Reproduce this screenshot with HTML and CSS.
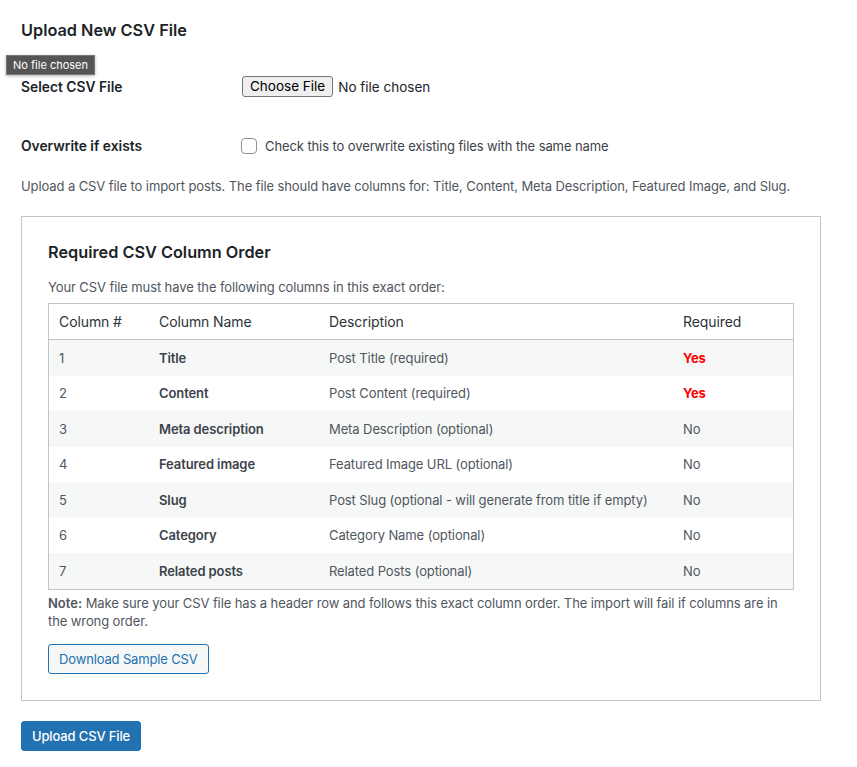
FILE: index.html
```html
<!DOCTYPE html>
<html>
<head>
<meta charset="utf-8">
<link rel="stylesheet" href="styles.css">
</head>
<body>
<div class="wrap">
  <h2 class="title">Upload New CSV File</h2>
  <div class="form-table">
    <div class="form-row">
      <div class="label">Select CSV File</div>
      <div class="field">
        <span class="file-input"><button class="file-btn" type="button">Choose File</button><span class="file-name">No file chosen</span></span>
      </div>
    </div>
    <div class="form-row">
      <div class="label">Overwrite if exists</div>
      <div class="field">
        <label class="check"><span class="checkbox"></span>Check this to overwrite existing files with the same name</label>
      </div>
    </div>
  </div>
  <p class="desc">Upload a CSV file to import posts. The file should have columns for: Title, Content, Meta Description, Featured Image, and Slug.</p>

  <div class="box">
    <h3 class="box-title">Required CSV Column Order</h3>
    <p class="box-desc">Your CSV file must have the following columns in this exact order:</p>
    <table class="cols">
      <thead>
        <tr><th class="c1">Column #</th><th class="c2">Column Name</th><th class="c3">Description</th><th class="c4">Required</th></tr>
      </thead>
      <tbody>
        <tr><td>1</td><td class="name">Title</td><td>Post Title (required)</td><td class="yes">Yes</td></tr>
        <tr><td>2</td><td class="name">Content</td><td>Post Content (required)</td><td class="yes">Yes</td></tr>
        <tr><td>3</td><td class="name">Meta description</td><td>Meta Description (optional)</td><td>No</td></tr>
        <tr><td>4</td><td class="name">Featured image</td><td>Featured Image URL (optional)</td><td>No</td></tr>
        <tr><td>5</td><td class="name">Slug</td><td>Post Slug (optional - will generate from title if empty)</td><td>No</td></tr>
        <tr><td>6</td><td class="name">Category</td><td>Category Name (optional)</td><td>No</td></tr>
        <tr><td>7</td><td class="name">Related posts</td><td>Related Posts (optional)</td><td>No</td></tr>
      </tbody>
    </table>
    <p class="note"><strong>Note:</strong> Make sure your CSV file has a header row and follows this exact column order. The import will fail if columns are in the wrong order.</p>
    <button class="btn-secondary" type="button">Download Sample CSV</button>
  </div>

  <button class="btn-primary" type="button">Upload CSV File</button>
</div>
<div class="tooltip">No file chosen</div>
</body>
</html>
```
FILE: styles.css
```css
html, body {
  margin: 0;
  padding: 0;
  background: #ffffff;
}
body {
  font-family: Inter, "Liberation Sans", sans-serif;
  font-size: 13px;
  letter-spacing: -0.1px;
  color: #3c434a;
  position: relative;
}
.wrap {
  padding: 0 0 0 21px;
  width: 800px;
}
.title {
  margin: 19px 0 0;
  font-size: 16.3px;
  line-height: 22px;
  font-weight: 600;
  letter-spacing: 0;
  color: #1d2327;
}
.form-table {
  margin-top: 16px;
}
.form-row {
  display: flex;
  align-items: center;
  height: 59px;
}
.label {
  width: 220px;
  font-size: 13.8px;
  font-weight: 600;
  letter-spacing: 0;
  color: #1d2327;
}
.field {
  display: flex;
  align-items: center;
}
.file-input {
  display: flex;
  align-items: center;
  font-size: 13.5px;
  letter-spacing: 0;
  color: #1d2327;
}
.file-btn {
  font-family: inherit;
  font-size: 13.5px;
  color: #000;
  background: #efefef;
  border: 1px solid #767676;
  border-radius: 3px;
  height: 21px;
  padding: 0 7px;
  line-height: 19px;
  margin: 0 5px 0 1px;
}
.file-name {
  line-height: 20px;
}
.check {
  display: flex;
  align-items: center;
  color: #3c434a;
}
.checkbox {
  width: 14px;
  height: 14px;
  border: 1px solid #8c8f94;
  border-radius: 4px;
  background: #fff;
  margin: 0 8px 0 0;
}
.desc {
  margin: 2px 0 0;
  line-height: 18px;
  color: #50575e;
}
.box {
  margin-top: 21px;
  border: 1px solid #c3c4c7;
  padding: 25px 26px 26px;
}
.box-title {
  margin: 0;
  font-size: 16.3px;
  line-height: 20px;
  font-weight: 600;
  letter-spacing: 0;
  color: #1d2327;
}
.box-desc {
  margin: 16px 0 0;
  line-height: 18px;
  color: #50575e;
}
.cols {
  margin-top: 7px;
  width: 100%;
  border-collapse: collapse;
  border: 1px solid #c3c4c7;
}
.cols th {
  text-align: left;
  font-weight: 400;
  font-size: 14px;
  color: #2c3338;
  height: 35px;
  padding: 0 10px;
  border-bottom: 1px solid #c3c4c7;
}
.cols td {
  height: 35.5px;
  padding: 0 10px;
  color: #50575e;
}
.cols tbody tr:nth-child(odd) {
  background: #f6f7f7;
}
.cols .c1 { width: 80px; }
.cols .c2 { width: 150px; }
.cols .c3 { width: 334px; }
.cols td.name {
  font-weight: 600;
  color: #3c434a;
}
.cols td.yes {
  font-weight: 700;
  color: #ff0000;
}
.note {
  margin: 4px 0 0;
  line-height: 18px;
  color: #50575e;
}
.note strong {
  font-weight: 600;
  letter-spacing: 0;
}
.btn-secondary {
  display: block;
  margin-top: 14px;
  font-family: inherit;
  font-size: 13px;
  letter-spacing: -0.15px;
  color: #2271b1;
  background: #f6f7f7;
  border: 1px solid #2271b1;
  border-radius: 3px;
  height: 30px;
  padding: 0 10px;
  line-height: 28px;
}
.btn-primary {
  display: block;
  margin-top: 20px;
  font-family: inherit;
  font-size: 13px;
  letter-spacing: -0.15px;
  font-weight: 500;
  color: #ffffff;
  background: #2271b1;
  border: 1px solid #2271b1;
  border-radius: 3px;
  height: 30px;
  padding: 0 10px;
  line-height: 28px;
}
.tooltip {
  position: absolute;
  left: 6px;
  top: 55px;
  height: 18px;
  line-height: 18px;
  padding: 0 6px;
  background: #555555;
  border: 1px solid #777777;
  color: #ffffff;
  font-size: 11px;
  letter-spacing: 0;
  box-shadow: 0 1px 3px rgba(0,0,0,0.3);
}
```
